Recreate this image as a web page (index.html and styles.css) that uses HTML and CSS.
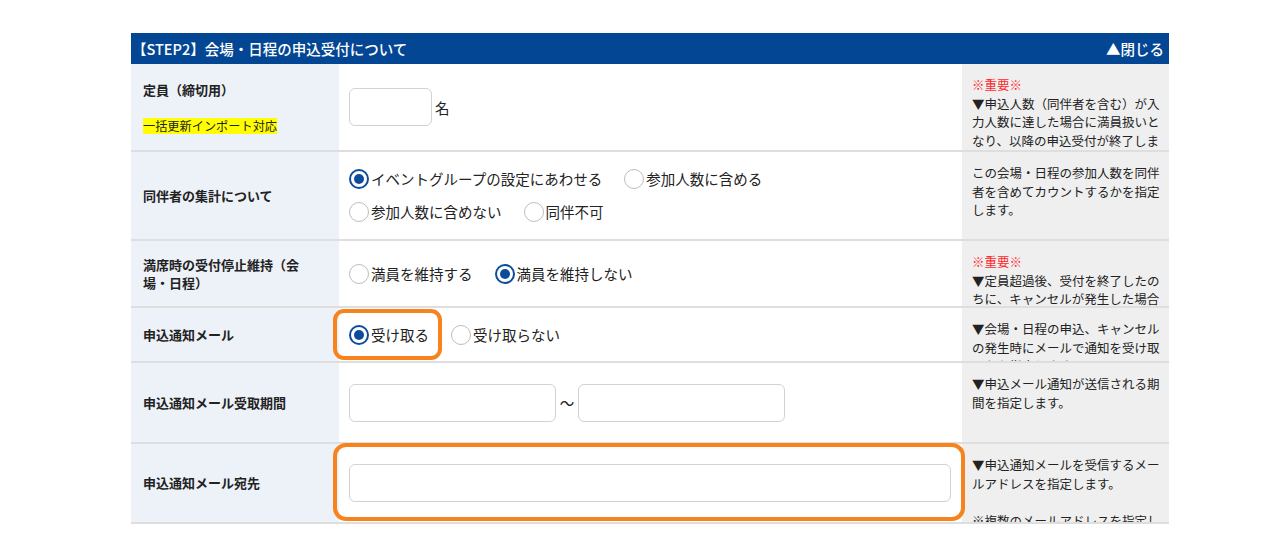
FILE: index.html
```html
<!DOCTYPE html>
<html lang="ja">
<head>
  <meta charset="UTF-8">
  <meta name="viewport" content="width=device-width, initial-scale=1.0">
  <title>STEP2 会場・日程の申込受付</title>
  <link rel="stylesheet" href="styles.css">
</head>
<body>
  <div class="page">
    <section class="panel">
      <div class="panel-head">
        <span class="panel-title">【STEP2】会場・日程の申込受付について</span>
        <span class="panel-close">▲閉じる</span>
      </div>

      <div class="row row-capacity">
        <div class="cell-label">
          <div class="label-stack">
            <span>定員（締切用）</span>
            <span class="mark-import">一括更新インポート対応</span>
          </div>
        </div>
        <div class="cell-input">
          <input type="text" class="form-control input-small">
          <span class="unit">名</span>
        </div>
        <div class="cell-note">
          <span class="note-important">※重要※</span><br>
          ▼申込人数（同伴者を含む）が入力人数に達した場合に満員扱いとなり、以降の申込受付が終了します。
        </div>
      </div>

      <div class="row row-companion">
        <div class="cell-label">同伴者の集計について</div>
        <div class="cell-input">
          <div class="radio-lines">
            <div class="radio-line">
              <label class="radio-item"><span class="radio checked"></span>イベントグループの設定にあわせる</label>
              <label class="radio-item"><span class="radio"></span>参加人数に含める</label>
            </div>
            <div class="radio-line">
              <label class="radio-item"><span class="radio"></span>参加人数に含めない</label>
              <label class="radio-item"><span class="radio"></span>同伴不可</label>
            </div>
          </div>
        </div>
        <div class="cell-note">この会場・日程の参加人数を同伴者を含めてカウントするかを指定します。</div>
      </div>

      <div class="row row-full">
        <div class="cell-label">満席時の受付停止維持（会場・日程）</div>
        <div class="cell-input">
          <label class="radio-item"><span class="radio"></span>満員を維持する</label>
          <label class="radio-item"><span class="radio checked"></span>満員を維持しない</label>
        </div>
        <div class="cell-note">
          <span class="note-important">※重要※</span><br>
          ▼定員超過後、受付を終了したのちに、キャンセルが発生した場合も満員の状態を維持します。
        </div>
      </div>

      <div class="row row-mail">
        <div class="cell-label">申込通知メール</div>
        <div class="cell-input">
          <label class="radio-item"><span class="radio checked"></span>受け取る</label>
          <label class="radio-item"><span class="radio"></span>受け取らない</label>
          <div class="focus-ring ring-mail"></div>
        </div>
        <div class="cell-note">▼会場・日程の申込、キャンセルの発生時にメールで通知を受け取るかを指定します。</div>
      </div>

      <div class="row row-period">
        <div class="cell-label">申込通知メール受取期間</div>
        <div class="cell-input">
          <input type="text" class="form-control input-date">
          <span class="tilde">〜</span>
          <input type="text" class="form-control input-date">
        </div>
        <div class="cell-note">▼申込メール通知が送信される期間を指定します。</div>
      </div>

      <div class="row row-address">
        <div class="cell-label">申込通知メール宛先</div>
        <div class="cell-input">
          <input type="text" class="form-control input-wide">
          <div class="focus-ring ring-address"></div>
        </div>
        <div class="cell-note">
          ▼申込通知メールを受信するメールアドレスを指定します。<br><br>
          ※複数のメールアドレスを指定した場合はカンマで区切ってください。
        </div>
      </div>
    </section>
  </div>
</body>
</html>
```

FILE: styles.css
```css
:root {
  --font-family: "Noto Sans CJK JP", "Noto Sans", sans-serif;
  --head-bg: #034694;
  --label-bg: #edf1f8;
  --note-bg: #efefef;
  --row-line: #dedede;
  --text: #222;
  --radio-on: #0d4c9c;
  --radio-off: #bdbdbd;
  --input-line: #d2d2d2;
  --accent: #f7831f;
}
* {
  box-sizing: border-box;
  margin: 0;
  padding: 0;
}
body {
  background: #fff;
  font-family: var(--font-family);
  color: var(--text);
}
.page {
  padding: 33px 0 0 131px;
}
.panel {
  width: 1038px;
}
.panel-head {
  height: 31px;
  background: var(--head-bg);
  color: #fff;
  display: flex;
  justify-content: space-between;
  align-items: center;
  padding: 0 5px 0 1px;
  font-size: 14.5px;
  font-weight: 500;
}
.row {
  display: grid;
  grid-template-columns: 208px 623px 207px;
  border-bottom: 2px solid var(--row-line);
}
.row-capacity { height: 88px; }
.row-companion { height: 89px; }
.row-full { height: 67px; }
.row-mail { height: 55px; }
.row-period { height: 81px; }
.row-address { height: 80px; }

.cell-label {
  background: var(--label-bg);
  display: flex;
  align-items: center;
  padding: 0 30px 0 12px;
  font-size: 13px;
  font-weight: 700;
  line-height: 18px;
}
.label-stack {
  display: flex;
  flex-direction: column;
  align-items: flex-start;
  gap: 19px;
  white-space: nowrap;
}
.mark-import {
  background: #ffff00;
  font-size: 12.2px;
  font-weight: 400;
  line-height: 16px;
}
.cell-input {
  position: relative;
  display: flex;
  align-items: center;
  padding-left: 10px;
  font-size: 14.5px;
}
.cell-note {
  background: var(--note-bg);
  padding: 12px 6px 0 10px;
  font-size: 12.5px;
  line-height: 18.5px;
  overflow: hidden;
}
.note-important {
  color: #ff2a2a;
}
.form-control {
  height: 38px;
  border: 1px solid var(--input-line);
  border-radius: 6px;
  background: #fff;
  font-family: var(--font-family);
  font-size: 14px;
  padding: 0 8px;
}
.input-small { width: 83px; }
.input-date { width: 207px; }
.input-wide { width: 602px; }
.unit {
  margin-left: 3px;
}
.tilde {
  width: 22px;
  text-align: center;
}
.radio-lines {
  display: flex;
  flex-direction: column;
  gap: 13px;
}
.radio-line {
  display: flex;
  align-items: center;
}
.radio-item {
  display: inline-flex;
  align-items: center;
  gap: 2px;
  margin-right: 22px;
  line-height: 20px;
}
.radio {
  width: 20px;
  height: 20px;
  border-radius: 50%;
  border: 1.5px solid var(--radio-off);
  background: #fff;
  display: inline-flex;
  justify-content: center;
  align-items: center;
}
.radio.checked {
  border: 2px solid var(--radio-on);
}
.radio.checked::after {
  content: "";
  width: 10px;
  height: 10px;
  border-radius: 50%;
  background: var(--radio-on);
}
.focus-ring {
  position: absolute;
  border: 4px solid var(--accent);
  border-radius: 11px;
  pointer-events: none;
}
.ring-mail {
  left: -6px;
  top: 1px;
  width: 109px;
  height: 51px;
}
.ring-address {
  left: -6px;
  top: -1px;
  width: 632px;
  height: 78px;
  border-radius: 13px;
}
```
